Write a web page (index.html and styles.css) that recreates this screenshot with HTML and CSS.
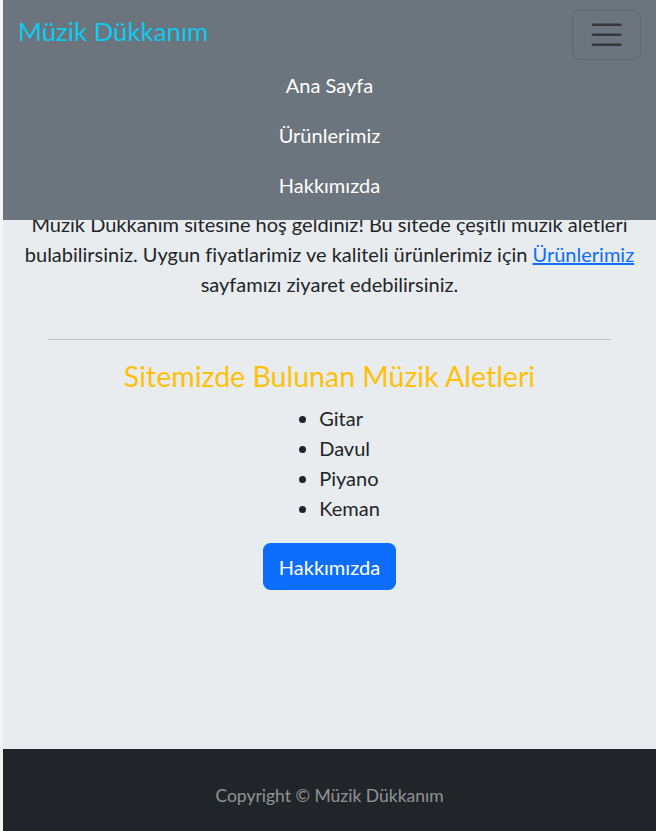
FILE: index.html
```html
<!DOCTYPE html>
<html lang="tr">
<head>
<meta charset="utf-8">
<title>Müzik Dükkanım</title>
<link rel="stylesheet" href="styles.css">
</head>
<body>
<div class="page">
  <nav class="navbar">
    <div class="nav-top">
      <a class="brand" href="#">Müzik Dükkanım</a>
      <button class="toggler" type="button" aria-label="Menü">
        <svg width="37.5" height="37.5" viewBox="0 0 30 30"><path stroke="rgba(33,37,41,0.75)" stroke-linecap="round" stroke-miterlimit="10" stroke-width="2" d="M4 7h22M4 15h22M4 23h22"/></svg>
      </button>
    </div>
    <ul class="nav-links">
      <li><a href="#">Ana Sayfa</a></li>
      <li><a href="#">Ürünlerimiz</a></li>
      <li><a href="#">Hakkımızda</a></li>
    </ul>
  </nav>
  <main class="main">
    <p class="intro">Müzik Dükkanım sitesine hoş geldiniz! Bu sitede çeşitli müzik aletleri bulabilirsiniz. Uygun fiyatlarimiz ve kaliteli ürünlerimiz için <a href="#">Ürünlerimiz</a> sayfamızı ziyaret edebilirsiniz.</p>
    <hr class="divider">
    <h4 class="section-title">Sitemizde Bulunan Müzik Aletleri</h4>
    <ul class="instruments">
      <li>Gitar</li>
      <li>Davul</li>
      <li>Piyano</li>
      <li>Keman</li>
    </ul>
    <div class="actions"><a class="btn" href="#">Hakkımızda</a></div>
  </main>
  <footer class="footer">
    <p><small>Copyright © Müzik Dükkanım</small></p>
  </footer>
</div>
</body>
</html>
```
FILE: styles.css
```css
* { box-sizing: border-box; }
html, body { margin: 0; padding: 0; height: 100%; overflow: hidden; }
body {
  background: #f3f4f6;
  font-family: "Lato", "Liberation Sans", sans-serif;
  font-size: 20px;
  line-height: 30px;
  color: #212529;
}
.page {
  margin-left: 3px;
  height: 831px;
  display: flex;
  flex-direction: column;
  background: #e9ecef;
  position: relative;
}
.navbar {
  position: absolute;
  top: 0; left: 0; right: 0;
  background: #6c757d;
  padding: 10px 15px;
  z-index: 10;
}
.nav-top {
  display: flex;
  justify-content: space-between;
  align-items: flex-start;
}
.brand {
  color: #0dcaf0;
  font-size: 25.8px;
  line-height: 30px;
  padding-top: 6px;
  text-decoration: none;
}
.toggler {
  width: 69.5px;
  height: 49.5px;
  padding: 0;
  border: 1px solid rgba(33,37,41,0.15);
  border-radius: 7.5px;
  background: transparent;
  display: flex;
  align-items: center;
  justify-content: center;
}
.nav-links {
  list-style: none;
  margin: 0;
  padding: 0;
  text-align: center;
}
.nav-links a {
  display: block;
  padding: 10px 0;
  color: #fff;
  text-decoration: none;
}
.main {
  flex: 1;
  padding: 209px 15px 0;
  text-align: center;
}
.intro { margin: 0 0 40px; }
.intro a { color: #0d6efd; }
.divider {
  border: 0;
  border-top: 1px solid #bfc2c5;
  margin: 0 30px 19px;
}
.section-title {
  color: #ffc107;
  font-size: 28.5px;
  line-height: 34.2px;
  font-weight: 400;
  margin: 0 0 10px;
}
.instruments {
  display: inline-block;
  margin: 0 0 20px;
  padding-left: 40px;
  text-align: left;
  vertical-align: top;
}
.actions { text-align: center; }
.btn {
  display: inline-block;
  background: #0d6efd;
  color: #fff;
  text-decoration: none;
  padding: 8.5px 16px;
  border-radius: 7.5px;
  line-height: 30px;
}
.footer {
  background: #212529;
  height: 82px;
  padding-top: 30px;
  text-align: center;
  color: rgba(255,255,255,0.5);
}
.footer p { margin: 0; }
.footer small { font-size: 17.5px; }
```
